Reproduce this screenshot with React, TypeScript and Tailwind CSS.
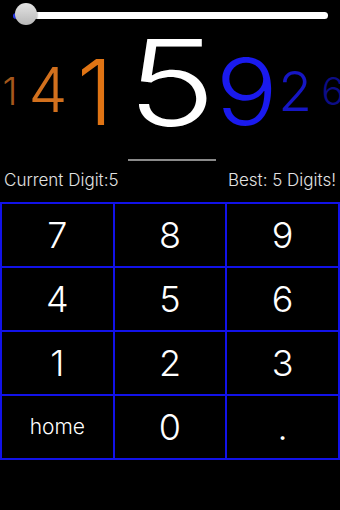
import React from 'react';

const KEYS = ['7', '8', '9', '4', '5', '6', '1', '2', '3', 'home', '0', '.'];

const App: React.FC = () => {
  return (
    <div className="w-[340px] h-[510px] bg-black overflow-hidden font-['Inter','Liberation_Sans',sans-serif] select-none">
      {/* Slider */}
      <div className="relative h-[28px]">
        <div className="absolute left-[13px] top-[13px] w-[4px] h-[6px] rounded-l-full bg-[#2a3cff]" />
        <div className="absolute left-[16px] right-[12px] top-[12px] h-[7px] rounded-full bg-white" />
        <div className="absolute left-[15px] top-[3px] w-[22px] h-[22px] rounded-full bg-gradient-to-b from-[#e4e4e4] to-[#b8b8b8] shadow-[0_1px_2px_rgba(0,0,0,0.6)]" />
      </div>

      {/* Digits strip */}
      <div className="h-[132px] flex items-start font-light leading-none">
        <span className="shrink-0 w-[20px] mt-[44px] flex justify-center text-[38px] text-[#a5581c]">1</span>
        <span className="shrink-0 w-[40px] ml-[8px] mt-[31px] flex justify-center text-[62px] text-[#d2701d]">4</span>
        <span className="shrink-0 w-[30px] ml-[12px] mt-[19px] flex justify-center text-[91px] text-[#e07414]">1</span>
        <div className="shrink-0 w-[90px] ml-[17px] -mt-[5px] flex flex-col items-center">
          <span className="text-[120px] text-white scale-x-[1.25]">5</span>
          <div className="mt-[16px] w-[88px] h-[2px] bg-[#8a8a8a]" />
        </div>
        <span className="shrink-0 w-[50px] ml-[5px] mt-[18px] flex justify-center text-[92px] text-[#1a1aee]">
          <span className="scale-x-[1.12]">9</span>
        </span>
        <span className="shrink-0 w-[30px] ml-[8px] mt-[36px] flex justify-center text-[55px] text-[#1616c4]">2</span>
        <span className="shrink-0 w-[24px] ml-[11px] mt-[44px] flex justify-center text-[38px] text-[#0d0d86]">6</span>
      </div>

      {/* Status row */}
      <div className="h-[42px] flex items-center justify-between px-[4px] text-[17px] font-light text-[#e2e2e2]">
        <span>Current Digit:5</span>
        <span>Best: 5 Digits!</span>
      </div>

      {/* Keypad */}
      <div className="grid grid-cols-3 gap-[2px] p-[2px] bg-[#1212e8]">
        {KEYS.map(k => (
          <div
            key={k}
            className={`h-[62px] bg-black flex items-center justify-center text-white font-light ${
              k === 'home' ? 'text-[21px]' : 'text-[36px]'
            }`}
          >
            {k}
          </div>
        ))}
      </div>
    </div>
  );
};

export default App;
